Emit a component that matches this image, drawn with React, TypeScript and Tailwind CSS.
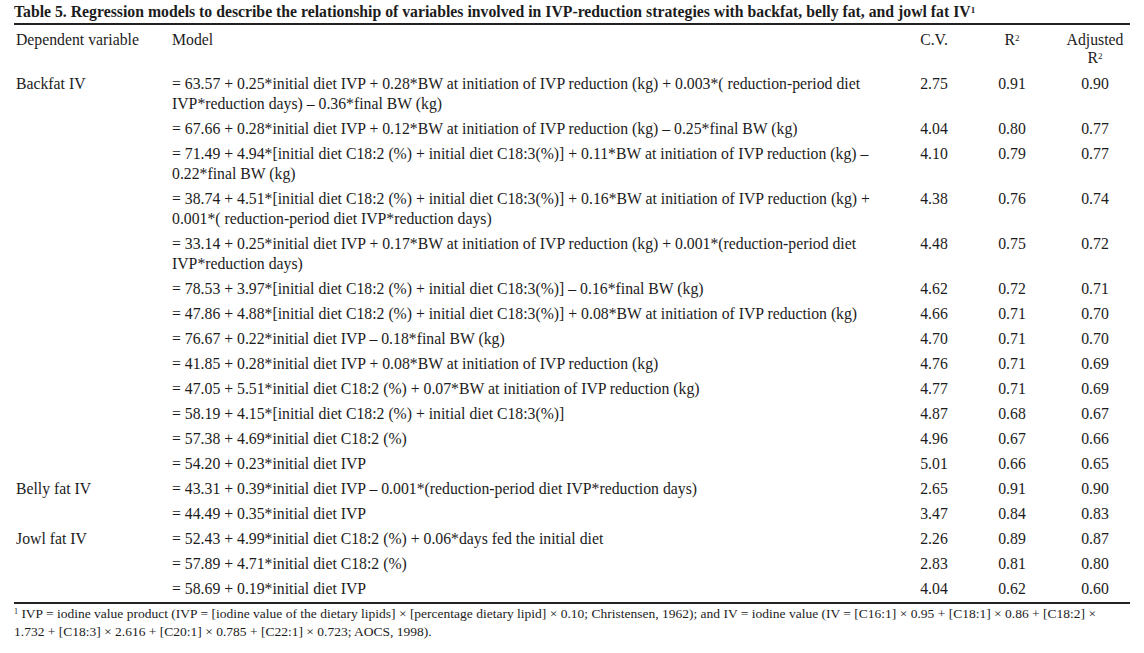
import React from "react";

type Row = {
  dep?: string;
  model: string[];
  cv: string;
  r2: string;
  adj: string;
};

const rows: Row[] = [
  {
    dep: "Backfat IV",
    model: [
      "= 63.57 + 0.25*initial diet IVP + 0.28*BW at initiation of IVP reduction (kg) + 0.003*( reduction-period diet",
      "IVP*reduction days) – 0.36*final BW (kg)",
    ],
    cv: "2.75", r2: "0.91", adj: "0.90",
  },
  {
    model: ["= 67.66 + 0.28*initial diet IVP + 0.12*BW at initiation of IVP reduction (kg) – 0.25*final BW (kg)"],
    cv: "4.04", r2: "0.80", adj: "0.77",
  },
  {
    model: [
      "= 71.49 + 4.94*[initial diet C18:2 (%) + initial diet C18:3(%)] + 0.11*BW at initiation of IVP reduction (kg) –",
      "0.22*final BW (kg)",
    ],
    cv: "4.10", r2: "0.79", adj: "0.77",
  },
  {
    model: [
      "= 38.74 + 4.51*[initial diet C18:2 (%) + initial diet C18:3(%)] + 0.16*BW at initiation of IVP reduction (kg) +",
      "0.001*( reduction-period diet IVP*reduction days)",
    ],
    cv: "4.38", r2: "0.76", adj: "0.74",
  },
  {
    model: [
      "= 33.14 + 0.25*initial diet IVP + 0.17*BW at initiation of IVP reduction (kg) + 0.001*(reduction-period diet",
      "IVP*reduction days)",
    ],
    cv: "4.48", r2: "0.75", adj: "0.72",
  },
  {
    model: ["= 78.53 + 3.97*[initial diet C18:2 (%) + initial diet C18:3(%)] – 0.16*final BW (kg)"],
    cv: "4.62", r2: "0.72", adj: "0.71",
  },
  {
    model: ["= 47.86 + 4.88*[initial diet C18:2 (%) + initial diet C18:3(%)] + 0.08*BW at initiation of IVP reduction (kg)"],
    cv: "4.66", r2: "0.71", adj: "0.70",
  },
  { model: ["= 76.67 + 0.22*initial diet IVP – 0.18*final BW (kg)"], cv: "4.70", r2: "0.71", adj: "0.70" },
  { model: ["= 41.85 + 0.28*initial diet IVP + 0.08*BW at initiation of IVP reduction (kg)"], cv: "4.76", r2: "0.71", adj: "0.69" },
  { model: ["= 47.05 + 5.51*initial diet C18:2 (%) + 0.07*BW at initiation of IVP reduction (kg)"], cv: "4.77", r2: "0.71", adj: "0.69" },
  { model: ["= 58.19 + 4.15*[initial diet C18:2 (%) + initial diet C18:3(%)]"], cv: "4.87", r2: "0.68", adj: "0.67" },
  { model: ["= 57.38 + 4.69*initial diet C18:2 (%)"], cv: "4.96", r2: "0.67", adj: "0.66" },
  { model: ["= 54.20 + 0.23*initial diet IVP"], cv: "5.01", r2: "0.66", adj: "0.65" },
  {
    dep: "Belly fat IV",
    model: ["= 43.31 + 0.39*initial diet IVP – 0.001*(reduction-period diet IVP*reduction days)"],
    cv: "2.65", r2: "0.91", adj: "0.90",
  },
  { model: ["= 44.49 + 0.35*initial diet IVP"], cv: "3.47", r2: "0.84", adj: "0.83" },
  {
    dep: "Jowl fat IV",
    model: ["= 52.43 + 4.99*initial diet C18:2 (%) + 0.06*days fed the initial diet"],
    cv: "2.26", r2: "0.89", adj: "0.87",
  },
  { model: ["= 57.89 + 4.71*initial diet C18:2 (%)"], cv: "2.83", r2: "0.81", adj: "0.80" },
  { model: ["= 58.69 + 0.19*initial diet IVP"], cv: "4.04", r2: "0.62", adj: "0.60" },
];

const cols = "grid grid-cols-[158px_724px_76px_80px_78px]";

export default function App() {
  return (
    <div
      className="w-[1144px] h-[653px] overflow-hidden bg-white px-[14px] pt-[3px] text-[#1c1c1c]"
      style={{ fontFamily: '"Liberation Serif", "Times New Roman", serif' }}
    >
      {/* ── Caption ─────────────────────────────────────────── */}
      <h1 className="text-[15.75px] font-bold leading-[18px] whitespace-nowrap">
        Table 5. Regression models to describe the relationship of variables involved in IVP-reduction strategies
        with backfat, belly fat, and jowl fat IV<sup className="text-[9px]">1</sup>
      </h1>

      <div className="mt-[2px] w-[1116px] border-t-2 border-[#222]">
        {/* Header */}
        <div className={`${cols} pt-[6px] pb-[5px] text-[15.75px] leading-[18px]`}>
          <div className="pl-[2px]">Dependent variable</div>
          <div>Model</div>
          <div className="text-center">C.V.</div>
          <div className="text-center">
            R<sup className="text-[9px]">2</sup>
          </div>
          <div className="pl-2 text-center">
            Adjusted
            <br />
            R<sup className="text-[9px]">2</sup>
          </div>
        </div>

        {/* Body */}
        <div className="border-b-2 border-[#222]">
          {rows.map((r, i) => (
            <div key={i} className={`${cols} pt-[2px] pb-[3px] text-[15.75px] leading-[20px]`}>
              <div className="pl-[2px]">{r.dep ?? ""}</div>
              <div className="whitespace-nowrap">
                {r.model.map((l, j) => (
                  <div key={j}>{l}</div>
                ))}
              </div>
              <div className="text-center">{r.cv}</div>
              <div className="text-center">{r.r2}</div>
              <div className="pl-2 text-center">{r.adj}</div>
            </div>
          ))}
        </div>

        {/* Footnote */}
        <div className="pt-[1px] text-[13.5px] leading-[18px] whitespace-nowrap">
          <div>
            <sup className="text-[8px]">1</sup> IVP = iodine value product (IVP = [iodine value of the dietary lipids] ×
            [percentage dietary lipid] × 0.10; Christensen, 1962); and IV = iodine value (IV = [C16:1] × 0.95 + [C18:1] ×
            0.86 + [C18:2] ×
          </div>
          <div>1.732 + [C18:3] × 2.616 + [C20:1] × 0.785 + [C22:1] × 0.723; AOCS, 1998).</div>
        </div>
      </div>
    </div>
  );
}
